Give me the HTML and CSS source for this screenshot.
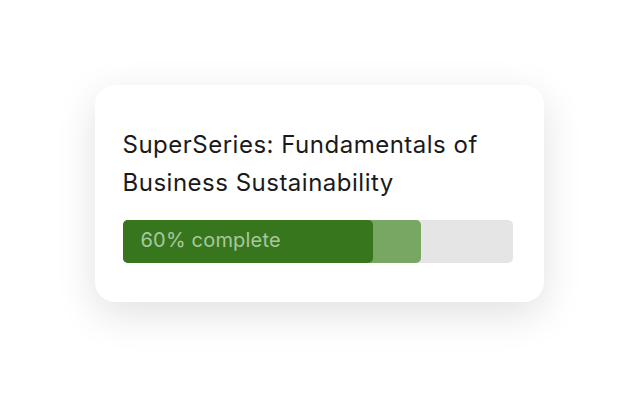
FILE: index.html
```
<!DOCTYPE html>
<html>
<head>
<title>Course progress</title>
<link rel="stylesheet" href="styles.css">
</head>
<body>

<div class="page">
  <div class="card">
    <h2 class="course-title">SuperSeries: Fundamentals of Business Sustainability</h2>
    <div class="track">
      <div class="buffer">
        <div class="done">60% complete</div>
      </div>
    </div>
  </div>
</div>

</body>
</html>
```
FILE: styles.css
```
body {
  font-family: Inter, "Noto Sans", sans-serif;
  margin: 0;
  padding: 0;
  background-color: #ffffff;
}

.page {
  display: flex;
  justify-content: center;
  align-items: flex-start;
  padding-top: 85px;
  min-height: 407px;
  box-sizing: border-box;
}

.card {
  width: 449px;
  box-sizing: border-box;
  padding: 41px 31px 39px 28px;
  background-color: #ffffff;
  border-radius: 20px;
  box-shadow: 0 12px 40px rgba(0, 0, 0, 0.12);
}

.course-title {
  margin: 0 0 18px 0;
  font-size: 24px;
  font-weight: 400;
  line-height: 38px;
  letter-spacing: 0.5px;
  color: #1a1a1a;
}

.track {
  height: 43px;
  background-color: #e5e5e5;
  border-radius: 5px;
  display: flex;
}

.buffer {
  width: 298px;
  background-color: #78a764;
  border-radius: 5px;
  display: flex;
}

.done {
  width: 250px;
  box-sizing: border-box;
  padding-left: 18px;
  background-color: #38761d;
  border-radius: 5px;
  color: #a9c89d;
  font-size: 20px;
  line-height: 41px;
  letter-spacing: 0.2px;
}
```
